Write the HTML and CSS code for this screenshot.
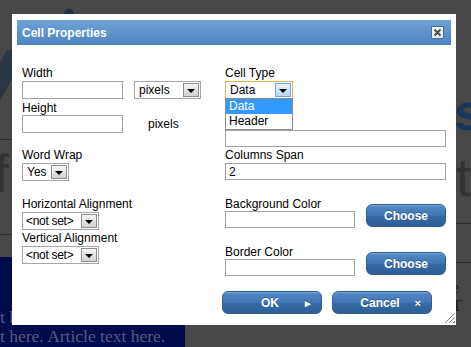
FILE: index.html
```html
<!DOCTYPE html>
<html lang="en">
<head>
    <meta charset="UTF-8">
    <title>Cell Properties</title>
    <link rel="stylesheet" href="styles.css">
</head>
<body>
    <!-- page behind the modal overlay -->
    <div class="page">
        <div class="bg-logo-top"></div>
        <div class="bg-slash"></div>
        <div class="bg-letter bg-f">f</div>
        <div class="bg-letter bg-s">s</div>
        <div class="bg-letter bg-t">t</div>
        <div class="bg-rule rule-left-1"></div>
        <div class="bg-rule rule-left-2"></div>
        <div class="bg-rule rule-right-1"></div>
        <div class="bg-rule rule-right-2"></div>
        <div class="bg-side-text">e T</div>
        <div class="bg-article">
            <p>t here. Article text here.</p>
            <p>t here. Article text here.</p>
        </div>
    </div>

    <div class="dialog">
        <div class="dialog-title">
            <span>Cell Properties</span>
            <span class="close-btn">
                <svg width="11" height="11" viewBox="0 0 11 11">
                    <path d="M2.5 2.5 L8.5 8.5 M8.5 2.5 L2.5 8.5" stroke="#4a4a4a" stroke-width="2"/>
                </svg>
            </span>
        </div>

        <div class="dialog-body">
            <div class="col col-left">
                <label class="lbl">Width</label>
                <div class="row">
                    <input type="text" class="txt txt-size">
                    <div class="select sel-unit">
                        <span class="select-text">pixels</span>
                        <span class="select-arrow"><i></i></span>
                    </div>
                </div>
                <label class="lbl gap-s">Height</label>
                <div class="row row-flush">
                    <input type="text" class="txt txt-size">
                    <span class="unit-text">pixels</span>
                </div>

                <label class="lbl gap-l">Word Wrap</label>
                <div class="select sel-yes">
                    <span class="select-text">Yes</span>
                    <span class="select-arrow"><i></i></span>
                </div>

                <label class="lbl gap-xl">Horizontal Alignment</label>
                <div class="select sel-align">
                    <span class="select-text">&lt;not set&gt;</span>
                    <span class="select-arrow"><i></i></span>
                </div>
                <label class="lbl gap-xs">Vertical Alignment</label>
                <div class="select sel-align">
                    <span class="select-text">&lt;not set&gt;</span>
                    <span class="select-arrow"><i></i></span>
                </div>
            </div>

            <div class="col col-right">
                <label class="lbl">Cell Type</label>
                <div class="dropdown">
                    <div class="select sel-type focused">
                        <span class="select-text">Data</span>
                        <span class="select-arrow hot"><i></i></span>
                    </div>
                    <ul class="dropdown-list">
                        <li class="selected">Data</li>
                        <li>Header</li>
                    </ul>
                </div>
                <input type="text" class="txt txt-wide hidden-row">

                <label class="lbl gap-xs">Columns Span</label>
                <input type="text" class="txt txt-wide" value="2">

                <div class="color-row">
                    <div class="color-field">
                        <label class="lbl">Background Color</label>
                        <input type="text" class="txt txt-color">
                    </div>
                    <button class="btn btn-choose">Choose</button>
                </div>
                <div class="color-row">
                    <div class="color-field">
                        <label class="lbl">Border Color</label>
                        <input type="text" class="txt txt-color">
                    </div>
                    <button class="btn btn-choose">Choose</button>
                </div>

                <div class="dialog-footer">
                    <button class="btn btn-action">OK<span class="btn-icon">&#9656;</span></button>
                    <button class="btn btn-action">Cancel<span class="btn-icon">&#215;</span></button>
                </div>
            </div>
        </div>

        <div class="grip"></div>
    </div>
</body>
</html>
```

FILE: styles.css
```css
body {
    margin: 0;
    width: 471px;
    height: 347px;
    overflow: hidden;
    background-color: #474747;
    font-family: "Liberation Sans", Arial, sans-serif;
    font-size: 12px;
    position: relative;
}

.page {
    position: absolute;
    inset: 0;
    overflow: hidden;
}
.bg-logo-top {
    position: absolute;
    left: 64px;
    top: 9px;
    width: 10px;
    height: 8px;
    border-radius: 5px 5px 0 0;
    background-color: #1d3046;
}
.bg-slash {
    position: absolute;
    left: -8px;
    top: 50px;
    width: 22px;
    height: 52px;
    background-color: #2a3644;
    transform: skewX(-30deg);
}
.bg-letter {
    position: absolute;
    font-family: "Liberation Sans", Arial, sans-serif;
    line-height: 1;
}
.bg-f {
    left: -6px;
    top: 146px;
    font-size: 54px;
    color: #333;
}
.bg-s {
    left: 454px;
    top: 86px;
    font-size: 52px;
    font-weight: bold;
    color: #17365a;
}
.bg-t {
    left: 456px;
    top: 150px;
    font-size: 54px;
    color: #333;
}
.bg-rule {
    position: absolute;
    height: 1px;
    background-color: #2e2e2e;
}
.rule-left-1 { left: 0; top: 139px; width: 12px; }
.rule-left-2 { left: 0; top: 234px; width: 12px; }
.rule-right-1 { left: 456px; top: 223px; width: 15px; }
.rule-right-2 { left: 456px; top: 262px; width: 15px; }
.bg-side-text {
    position: absolute;
    left: 452px;
    top: 279px;
    font-family: "Liberation Serif", serif;
    font-size: 16px;
    color: #1e1a14;
}
.bg-article {
    position: absolute;
    left: 0;
    top: 257px;
    width: 185px;
    height: 90px;
    background-color: #000b4e;
    overflow: hidden;
}
.bg-article p {
    margin: 0;
    white-space: nowrap;
    font-family: "Liberation Serif", serif;
    font-size: 17.5px;
    line-height: 19px;
    color: #585a7c;
}
.bg-article p:first-child {
    margin-top: 51px;
}

/* dialog */
.dialog {
    position: absolute;
    left: 12px;
    top: 14px;
    width: 444px;
    height: 311px;
    background-color: #fff;
}
.dialog-title {
    margin: 6px 5px 0;
    height: 25px;
    padding: 0 7px 0 5px;
    display: flex;
    align-items: center;
    justify-content: space-between;
    background: linear-gradient(#6ea2d6, #4e84c0);
    color: #fff;
    font-weight: bold;
    font-size: 12px;
}
.close-btn {
    width: 13px;
    height: 13px;
    box-sizing: border-box;
    border: 1px solid #3d6ea6;
    background: linear-gradient(#ffffff, #e4e8ee);
    display: flex;
    align-items: center;
    justify-content: center;
}
.close-btn svg {
    display: block;
}
.dialog-body {
    display: grid;
    grid-template-columns: 203px 221px;
    padding: 21px 10px 0;
}
.col {
    display: flex;
    flex-direction: column;
    align-items: flex-start;
}
.lbl {
    display: block;
    line-height: 14px;
    height: 14px;
    color: #000;
}
.gap-xs { margin-top: 1px; }
.gap-s { margin-top: 2px; }
.gap-l { margin-top: 15px; }
.gap-xl { margin-top: 16px; }

.row {
    display: flex;
    align-items: center;
    margin-top: 1px;
}
.row-flush {
    margin-top: 0;
}
.unit-text {
    margin-left: 25px;
}

.txt {
    box-sizing: border-box;
    margin: 0;
    padding: 0 3px;
    border: 1px solid #a2a2a2;
    background: #fff;
    font-family: "Liberation Sans", Arial, sans-serif;
    font-size: 12px;
    color: #000;
    outline: none;
}
.txt-size {
    width: 101px;
    height: 18px;
}
.txt-wide {
    width: 221px;
    height: 17px;
    margin-top: 1px;
}
.hidden-row {
    margin-top: 31px;
}
.txt-color {
    width: 130px;
    height: 17px;
}

/* fake selects, IE style */
.select {
    box-sizing: border-box;
    height: 18px;
    display: flex;
    align-items: center;
    border: 1px solid #a5a5a5;
    background: #fff;
    margin-top: 1px;
}
.select-text {
    flex: 1;
    padding-left: 4px;
    white-space: nowrap;
}
.select-arrow {
    box-sizing: border-box;
    width: 16px;
    height: 14px;
    margin-right: 1px;
    border: 1px solid #8e8e8e;
    background: linear-gradient(#f6f6f6, #d2d2d2);
    display: flex;
    align-items: center;
    justify-content: center;
}
.select-arrow i {
    width: 0;
    height: 0;
    border-left: 4px solid transparent;
    border-right: 4px solid transparent;
    border-top: 4px solid #000;
    margin-top: 1px;
}
.select-arrow.hot {
    border-color: #7aa2c8;
    background: linear-gradient(#e6f2fc, #bcd8f2);
}
.sel-unit {
    width: 67px;
    margin-top: 0;
    margin-left: 11px;
}
.sel-yes { width: 47px; }
.sel-align { width: 77px; }
.sel-type { width: 68px; }
.select.focused {
    border-color: #e0b052;
}
.sel-align .select-text {
    padding-left: 3px;
    letter-spacing: -0.3px;
}

.dropdown {
    position: relative;
}
.dropdown-list {
    position: absolute;
    left: 0;
    top: 18px;
    width: 68px;
    box-sizing: border-box;
    margin: 0;
    padding: 0;
    list-style: none;
    border: 1px solid #8a8a8a;
    background: #fff;
    z-index: 2;
}
.dropdown-list li {
    height: 15px;
    line-height: 15px;
    padding-left: 3px;
}
.dropdown-list li.selected {
    background-color: #3399ff;
    color: #fff;
}

.color-row {
    display: flex;
    align-items: flex-end;
    margin-top: 17px;
}
.color-field {
    display: flex;
    flex-direction: column;
}
.btn {
    box-sizing: border-box;
    height: 23px;
    border: 1px solid #2f5e92;
    border-radius: 6px;
    background: linear-gradient(#80ade0 0%, #5188c4 8%, #3f76b3 50%, #346aa4 55%, #2e5f96 100%);
    color: #fff;
    font-family: "Liberation Sans", Arial, sans-serif;
    font-size: 12px;
    font-weight: bold;
    text-shadow: 0 -1px 0 rgba(0, 0, 0, 0.25);
    padding: 0;
    cursor: pointer;
}
.btn-choose {
    width: 80px;
    margin-left: 11px;
    margin-bottom: 1px;
}
.dialog-footer {
    display: flex;
    gap: 10px;
    margin-top: 15px;
    margin-left: -3px;
}
.btn-action {
    width: 100px;
    position: relative;
    padding-right: 4px;
}
.btn-icon {
    position: absolute;
    right: 10px;
    top: 4px;
    font-size: 11px;
    line-height: 14px;
}

.grip {
    position: absolute;
    right: 1px;
    bottom: 2px;
    width: 11px;
    height: 11px;
    background: repeating-linear-gradient(135deg, transparent 0, transparent 2px, #8a8a8a 2px, #8a8a8a 3px);
    clip-path: polygon(100% 0, 100% 100%, 0 100%);
}
```
